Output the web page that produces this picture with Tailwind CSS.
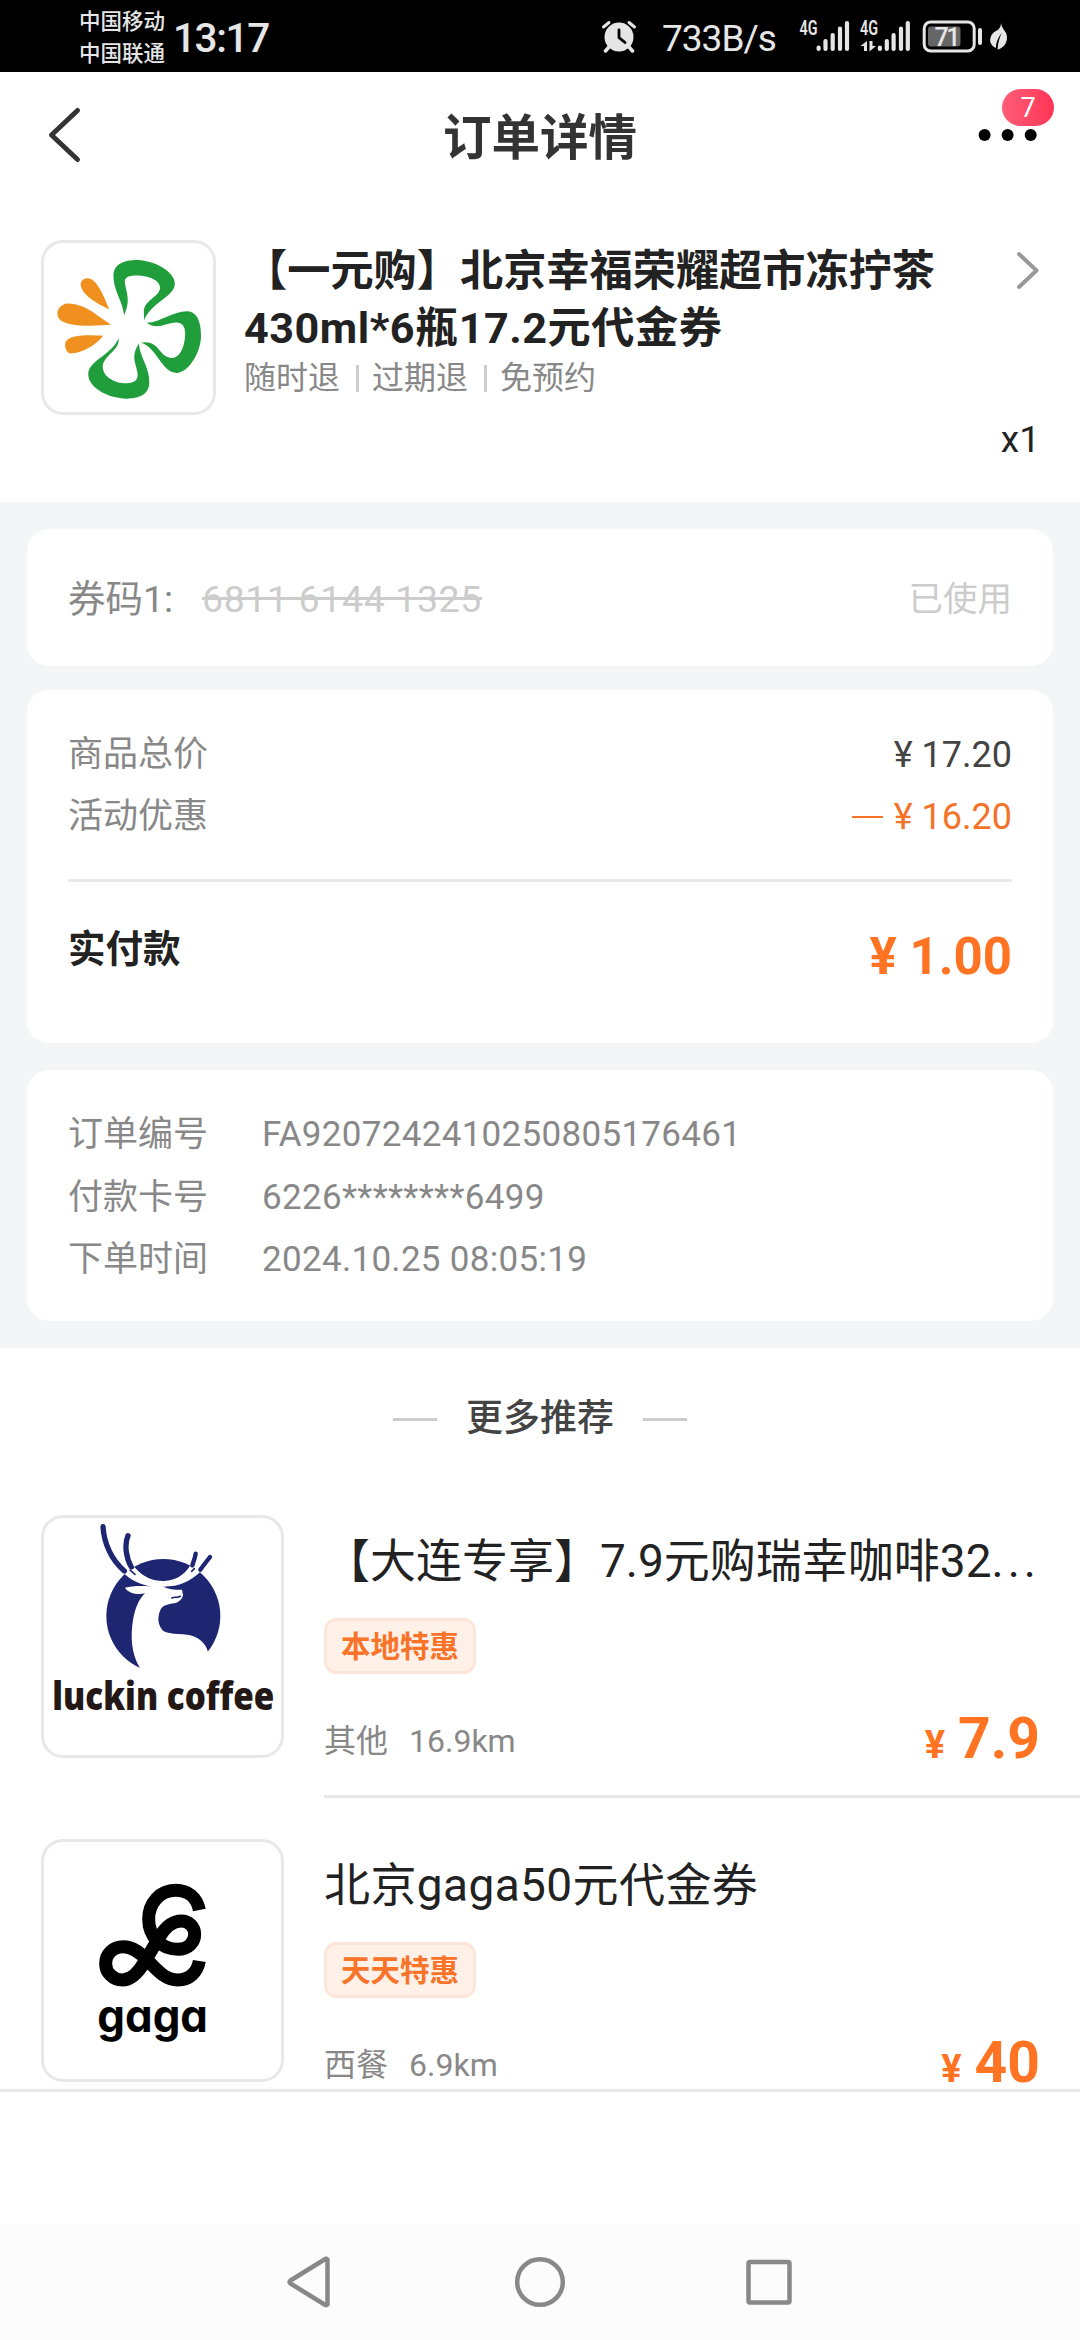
<!DOCTYPE html>
<html lang="zh-CN">
<head>
<meta charset="utf-8">
<title>订单详情</title>
<script src="https://cdn.jsdelivr.net/npm/@tailwindcss/browser@4"></script>
</head>
<body class="w-[1080px] h-[2340px] overflow-hidden bg-white font-[Roboto,'Noto_Sans_CJK_SC',sans-serif] text-[#222] whitespace-nowrap">

<!-- status bar -->
<div class="h-[72px] bg-black text-[#e6e6e6] flex">
  <div class="ml-[79px] mt-[6px] w-[94px] text-[21.5px] leading-[32px] font-medium"><div>中国移动</div><div>中国联通</div></div>
  <div class="w-[428px] text-[40.5px] leading-[76px] font-medium tracking-[-1.4px]">13:17</div>
  <svg class="mt-[20px] w-[36px] h-[33px]" viewBox="0 0 36 33" fill="none" stroke="#e6e6e6" stroke-linecap="round">
    <path d="M8 27 4.5 31M28 27l3.500 4" stroke-width="3.500"/>
    <circle cx="18" cy="17" r="14.500" fill="#e6e6e6" stroke="none"/>
    <path d="M2.500 7 8 2.500M33.500 7 28 2.500" stroke-width="3"/>
    <path d="M18 10v7.500l6 5" stroke="#000" stroke-width="2.800"/>
  </svg>
  <div class="ml-[25px] w-[137px] text-[37px] leading-[77px] tracking-[-1px]">733B/s</div>
  <svg class="w-[112px] h-[72px]" viewBox="799 0 112 72" fill="#e6e6e6">
    <text x="799.500" y="34.500" font-family="Roboto" font-weight="600" font-size="19.500" textLength="18" lengthAdjust="spacingAndGlyphs">4G</text>
    <text x="860" y="34.500" font-family="Roboto" font-weight="600" font-size="19.500" textLength="18" lengthAdjust="spacingAndGlyphs">4G</text>
    <g stroke="#e6e6e6" stroke-width="4.200" stroke-linecap="round">
      <path d="M818.600 47.500v1.500M825.500 41v8M832.700 35v14M840 28.500v20.500M847 23v26"/>
      <path d="M879.900 47.500v1.500M886.800 41v8M893.600 35v14M901 28.500v20.500M907.800 23v26"/>
    </g>
    <path d="M867 41v10h-3v-5h-3.500zM869.500 41h3v5h3.500l-6.500 5.500z"/>
  </svg>
  <svg class="ml-[10px] w-[90px] h-[72px]" viewBox="921 0 90 72">
    <rect x="924.200" y="22" width="50" height="29" rx="6.500" fill="none" stroke="#e6e6e6" stroke-width="3"/>
    <rect x="928" y="26.500" width="32.500" height="20" rx="3" fill="#666"/>
    <text x="934.500" y="46" font-family="Roboto" font-weight="500" font-size="25" textLength="26" fill="#e6e6e6">71</text>
    <rect x="978" y="28" width="4" height="17" rx="2" fill="#e6e6e6"/>
    <path d="M1001 23c1 7 6 8 6 14.500 0 6-4 11-9.500 12 .5-7 2-12 4.500-17-4 5-6 10-6.200 15.500C986 43 991 33 996 31c3-1.500 5-4 5-8z" fill="#e6e6e6"/>
  </svg>
</div>

<!-- header -->
<div class="h-[168px] grid grid-cols-[1fr_auto_1fr]">
  <svg class="ml-[46px] mt-[32px] w-[120px] h-[62px]" viewBox="46 104 120 62" fill="none" stroke="#333" stroke-width="5" stroke-linecap="round" stroke-linejoin="round"><path d="M77.500 110.500 51.500 135l26 24.500"/></svg>
  <h1 class="text-[48.500px] leading-[134px] font-bold text-[#333]">订单详情</h1>
  <div class="relative w-[106px] justify-self-end">
    <svg class="mt-[56px] w-[70px] h-[14px]" viewBox="974 128 70 14"><circle cx="984.600" cy="135" r="6"/><circle cx="1007.600" cy="135" r="6"/><circle cx="1030.700" cy="135" r="6"/></svg>
    <span class="absolute left-[28px] top-[17px] w-[52px] h-[37px] rounded-full bg-linear-to-r from-[#ff5c78] to-[#ff3355] text-white text-[27px] leading-[39px] text-center">7</span>
  </div>
</div>

<!-- purchased item -->
<div class="h-[262px] pl-[41px] pr-[39px] flex">
  <div class="w-[175px] h-[175px] border-3 border-[#e8e8e8] rounded-[22px]">
    <svg class="w-full h-full" viewBox="128.700 129 490 506" preserveAspectRatio="none" fill="#209e3c">
      <path d="M361 345C356 300 328 270 330 222 333 190 365 179 400 180 450 182 508 215 508 250 508 290 440 305 419 360 L418 330C425 295 465 290 465 262 465 240 430 225 395 226 375 226 362 232 363 245 366 275 382 300 361 345Z"/>
      <path d="M426 368C470 365 500 333 545 333 575 335 584 370 584 405 584 460 545 518 513 518 470 518 455 440 410 428 425 423 445 428 457 442 470 458 480 474 503 473 525 470 538 435 538 400 538 380 530 366 510 367 480 370 455 390 426 368Z"/>
      <path d="M404 430C405 470 436 500 434 550 432 585 400 595 370 595 310 594 257 560 257 522 257 480 325 465 345 414 350 450 300 465 299 500 300 530 335 550 370 549 390 548 402 540 400 520 397 490 378 470 404 430Z"/>
      <g fill="#f0901f"><path d="M318 328C290 315 235 285 235 252 237 238 250 232 262 236 285 242 305 295 318 328Z"/><path d="M323 373C280 378 190 382 172 355 160 335 175 310 200 310 250 312 280 345 323 373Z"/><path d="M300 407C285 430 240 460 205 460 190 455 185 430 195 420 215 402 265 405 300 407Z"/></g>
    </svg>
  </div>
  <div class="ml-[28px] mt-[3px] flex-1">
    <div class="text-[43.200px] leading-[57px] font-bold"><div>【一元购】北京幸福荣耀超市冻拧茶</div><div class="tracking-[0.5px]">430ml*6瓶17.2元代金券</div></div>
    <div class="flex items-center h-[42px] text-[32px] leading-[42px] text-[#888] gap-[15.500px]"><span>随时退</span><i class="w-[3px] h-[27px] bg-[#ccc] mr-[-2px]"></i><span>过期退</span><i class="w-[3px] h-[27px] bg-[#ccc] mr-[-2px]"></i><span>免预约</span></div>
  </div>
  <div class="flex flex-col items-end">
    <svg class="mt-[8px] w-[26px] h-[44px]" viewBox="1015 248 26 44" fill="none" stroke="#999" stroke-width="4" stroke-linecap="round" stroke-linejoin="round"><path d="M1019 254l17.500 16.500L1019 287"/></svg>
    <div class="mt-[127px] mr-[1px] text-[37px] leading-[42px]">x1</div>
  </div>
</div>

<!-- order cards -->
<div class="h-[846px] bg-[#f4f5f7] px-[27px] pt-[27px]">
  <div class="h-[137px] rounded-[22px] bg-white px-[41px] flex items-center text-[37.500px]">
    <span class="text-[#888] w-[134px] mt-[4px]">券码1:</span>
    <span class="relative text-[#ccc] mt-[4px] tracking-[0.6px]">6811 6144 1325<i class="absolute left-0 right-0 top-[26px] h-[3px] bg-[#ccc]"></i></span>
    <span class="ml-auto text-[34.500px] text-[#ccc] mt-[4px]">已使用</span>
  </div>

  <div class="mt-[24px] h-[353px] rounded-[22px] bg-white px-[41px] pt-[34px]">
    <div class="flex justify-between text-[35px] leading-[62px]"><span class="text-[#888]">商品总价</span><span class="text-[36px] text-[#444]">¥ 17.20</span></div>
    <div class="flex justify-between text-[35px] leading-[62px]"><span class="text-[#888]">活动优惠</span><span class="flex items-center text-[36px] text-[#f37329]"><i class="w-[31px] h-[2.500px] bg-[#f37329] mr-[11px]"></i>¥ 16.20</span></div>
    <div class="mt-[31px] h-[3px] bg-[#e8e8e8]"></div>
    <div class="flex justify-between font-bold"><span class="text-[37.500px] leading-[134px]">实付款</span><span class="text-[51px] leading-[150px] text-[#ff7322]">¥ 1.00</span></div>
  </div>

  <div class="mt-[27px] h-[251px] rounded-[22px] bg-white px-[41px] pt-[34px] grid grid-cols-[194px_1fr] auto-rows-[62.500px] text-[35px] leading-[62.500px] text-[#888]">
    <span>订单编号</span><span class="tracking-[0.3px]">FA9207242410250805176461</span>
    <span>付款卡号</span><span class="tracking-[0.3px]">6226********6499</span>
    <span>下单时间</span><span class="tracking-[0.3px]">2024.10.25 08:05:19</span>
  </div>
</div>

<!-- recommendations -->
<div class="h-[167px] pt-[2px] flex justify-center">
  <div class="h-[138px] flex items-center gap-[29px]"><i class="w-[44px] h-[3px] bg-[#ccc]"></i><h2 class="text-[37px] font-medium text-[#444]">更多推荐</h2><i class="w-[44px] h-[3px] bg-[#ccc]"></i></div>
</div>

<div class="h-[324px] pl-[41px] flex">
  <div class="w-[243px] h-[243px] border-3 border-[#e8e8e8] rounded-[22px]">
    <svg class="w-full h-full overflow-visible" viewBox="73 84 711 711">
      <circle cx="431" cy="378" r="171" fill="#1e2672"/>
      <path fill="#fff" d="M360 533C335 490 332 440 340 390 347 350 360 325 376 310 355 315 325 310 316 293 335 287 370 287 393 289 400 283 425 287 432 290 445 298 475 300 487 299L490 315C488 328 478 335 468 339 440 344 430 345 422 360 412 385 415 405 430 422 450 436 500 428 525 440 550 452 562 470 565 487L600 560H360Z"/>
      <path fill="#fff" d="M312 250L345 232C370 262 400 274 435 273 480 270 500 245 512 226L544 244C510 275 480 290 432 290L395 290C365 284 335 272 312 250Z"/>
      <g fill="none" stroke="#1e2672" stroke-linecap="round"><path stroke-width="16" d="M250 110C253 160 275 210 314 243M325 137C313 165 320 205 335 231"/><path stroke-width="13" d="M528 191C526 205 522 213 518 226M571 201C560 215 550 228 542 239"/><path stroke-width="5" d="M332 241 346 253M524 236 516 244M457 324C465 319 472 325 482 319"/></g>
      <text x="98" y="660" font-family="Open Sans" font-weight="800" font-size="115" textLength="666" lengthAdjust="spacingAndGlyphs" fill="#231815">luckin coffee</text>
    </svg>
  </div>
  <div class="ml-[40px] w-[756px] h-[283px] border-b-3 border-[#e8e8e8]">
    <div class="mt-[16px] text-[46px] leading-[60px]">【大连专享】7.9元购瑞幸咖啡32<span class="tracking-[4px]">...</span></div>
    <div class="mt-[27px] w-[152px] h-[56px] rounded-[12px] border-3 border-[#fee5d9] bg-[#fff0e8] text-center text-[29.500px] leading-[52px] font-bold text-[#f97328]">本地特惠</div>
    <div class="mt-[37px] h-[60px] pr-[40px] flex items-center text-[32px] text-[#888]"><span class="w-[85px]">其他</span><span>16.9km</span><span class="ml-auto flex items-baseline gap-[13px] mt-[2px] font-bold text-[#ff7322] text-[57px] leading-[60px]"><span class="text-[38px]">¥</span>7.9</span></div>
  </div>
</div>

<div class="h-[250px] pl-[41px] flex">
  <div class="w-[243px] h-[243px] border-3 border-[#e8e8e8] rounded-[22px]">
    <svg class="w-full h-full" viewBox="73 66 711 711">
      <path fill="none" stroke="#000" stroke-width="39" d="M539 270C532 232 505 211 468 211 420 211 387 250 387 297 387 350 425 388 475 388 505 388 525 368 525 343 525 320 508 303 485 303 455 303 435 325 420 350L375 425C355 460 335 480 308 480 280 480 258 458 258 431 258 402 280 380 310 380 340 380 362 398 385 422 415 455 440 480 475 480 508 480 533 458 539 423"/>
      <text class="[font-feature-settings:'cv11']" x="233" y="635" font-family="Inter" font-weight="700" font-size="136" textLength="332" lengthAdjust="spacingAndGlyphs">gaga</text>
    </svg>
  </div>
  <div class="ml-[40px] w-[756px]">
    <div class="mt-[16px] text-[46px] leading-[60px] tracking-[0.4px]">北京gaga50元代金券</div>
    <div class="mt-[27px] w-[152px] h-[56px] rounded-[12px] border-3 border-[#fee5d9] bg-[#fff0e8] text-center text-[29.500px] leading-[52px] font-bold text-[#f97328]">天天特惠</div>
    <div class="mt-[37px] h-[60px] pr-[40px] flex items-center text-[32px] text-[#888]"><span class="w-[85px]">西餐</span><span>6.9km</span><span class="ml-auto flex items-baseline gap-[13px] mt-[2px] font-bold text-[#ff7322] text-[57px] leading-[60px]"><span class="text-[38px]">¥</span>40</span></div>
  </div>
</div>
<div class="h-[3px] bg-[#e8e8e8]"></div>

<!-- system navigation -->
<div class="mt-[132px] h-[116px] bg-[#fcfcfc]">
  <svg class="w-[1080px] h-[116px]" viewBox="0 2224 1080 116" fill="none" stroke="#888" stroke-width="4.500" stroke-linejoin="round">
    <path d="M327.500 2259.500v45q-1.500 1.500-3 0l-34-21q-2-1.500 0-3l34-21q1.500-1.500 3 0z"/>
    <circle cx="540" cy="2282" r="22.800"/><rect x="748.500" y="2262" width="41" height="40.500" rx="1.500"/>
  </svg>
</div>
</body>
</html>
